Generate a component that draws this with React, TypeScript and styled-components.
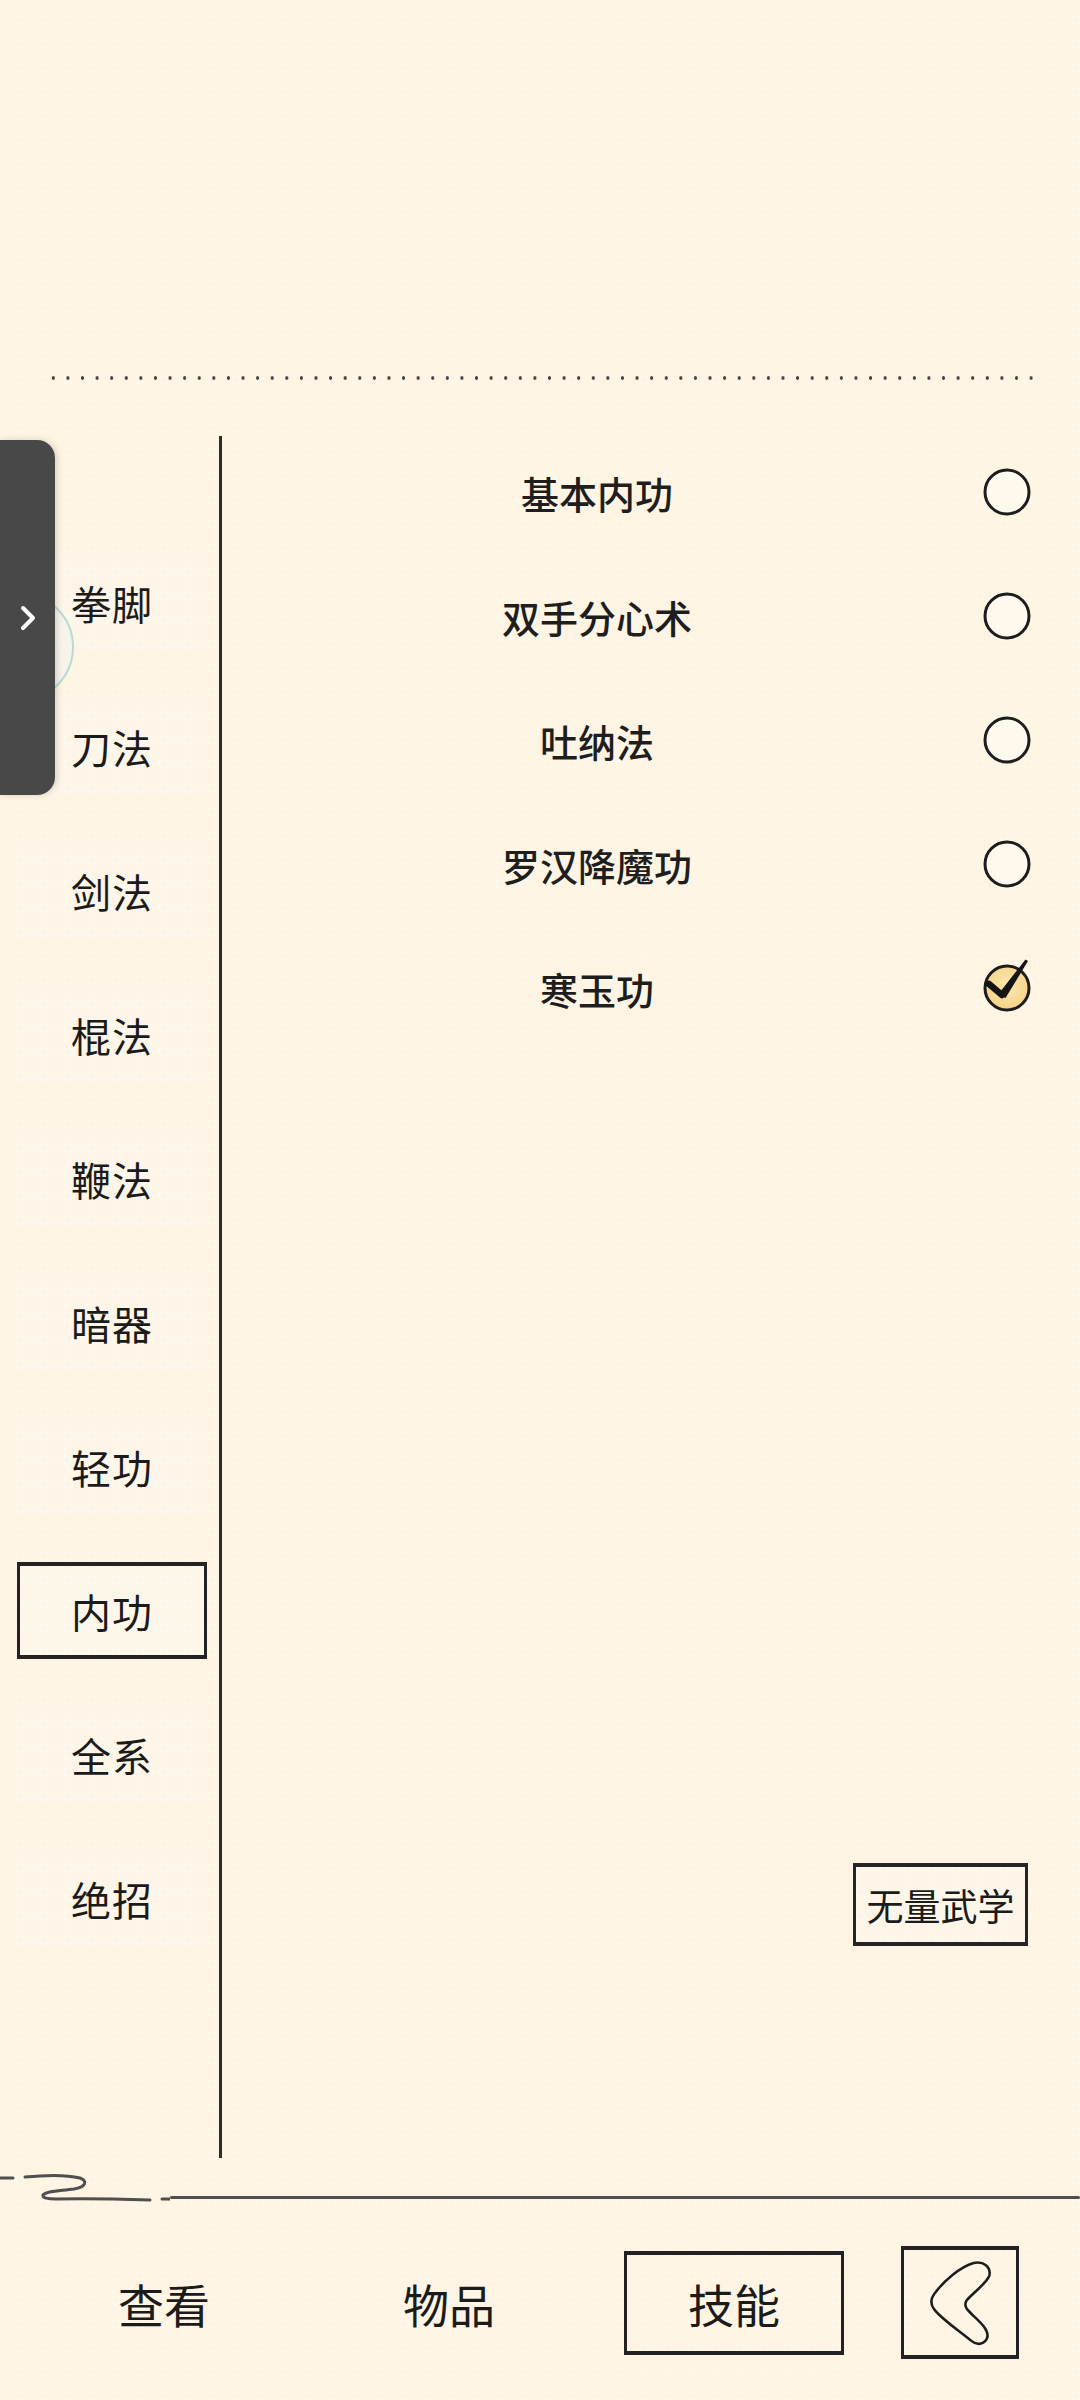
import React, { useState } from 'react';
import styled, { createGlobalStyle } from 'styled-components';

const GlobalStyle = createGlobalStyle`
  html, body {
    margin: 0;
    padding: 0;
    background: #fdf4e3;
  }
  body {
    font-family: "Noto Sans CJK SC", "Noto Sans", sans-serif;
    color: #1b1b1b;
  }
`;

const Page = styled.div`
  position: relative;
  width: 1080px;
  height: 2400px;
  overflow: hidden;
  background-color: #fdf4e3;
  background-image: radial-gradient(circle, transparent 3px, rgba(255, 255, 255, 0.45) 4px, transparent 5.5px);
  background-size: 24px 24px;
  background-position: 8px 8px;
`;

const TopSpace = styled.div`
  height: 376px;
`;

const DottedRule = styled.div`
  height: 4px;
  margin: 0 46px;
  background: radial-gradient(circle, #333 1.5px, transparent 2px) 0 0 / 14.6px 4px repeat-x;
  opacity: 0.9;
`;

const Main = styled.div`
  display: flex;
  margin-top: 56px;
  height: 1722px;
`;

const Sidebar = styled.nav`
  width: 222px;
  box-sizing: border-box;
  border-right: 3px solid #2c2c2c;
  display: flex;
  flex-direction: column;
  gap: 47px;
  padding-top: 118px;
`;

const SideItem = styled.div<{ $active?: boolean }>`
  width: 190px;
  height: 97px;
  margin-left: 17px;
  box-sizing: border-box;
  display: flex;
  align-items: center;
  justify-content: center;
  font-size: 40px;
  letter-spacing: 1px;
  background: ${({ $active }) => ($active ? 'rgba(255,255,255,0.25)' : 'rgba(255,255,255,0.15)')};
  border: 3px solid ${({ $active }) => ($active ? '#232323' : 'transparent')};
  border-top-width: ${({ $active }) => ($active ? '4px' : '3px')};
  border-bottom-width: ${({ $active }) => ($active ? '4px' : '3px')};
`;

const Content = styled.section`
  flex: 1;
  display: flex;
  flex-direction: column;
  gap: 44px;
  padding-top: 16px;
`;

const SkillRow = styled.div`
  height: 80px;
  display: grid;
  grid-template-columns: 1fr 70px;
  align-items: center;
  padding-right: 38px;
`;

const SkillName = styled.div`
  text-align: center;
  font-size: 38px;
  font-weight: 500;
  color: #1e1e1e;
`;

const RadioWrap = styled.div`
  display: flex;
  justify-content: center;
  align-items: center;
  cursor: pointer;

  svg {
    overflow: visible;
  }
`;

const BoxButton = styled.button`
  margin-top: auto;
  margin-bottom: 212px;
  margin-right: 52px;
  align-self: flex-end;
  width: 175px;
  height: 83px;
  box-sizing: border-box;
  background: rgba(255, 255, 255, 0.2);
  border: 3px solid #252525;
  border-top-width: 4px;
  border-bottom-width: 4px;
  font-family: inherit;
  font-size: 37px;
  color: #1b1b1b;
  padding: 0;
`;

const RuleRow = styled.div`
  display: flex;
  align-items: flex-end;
  height: 45px;
  margin-top: 2px;
`;

const RuleLine = styled.div`
  flex: 1;
  height: 3px;
  margin-bottom: 6px;
  background: #4f4f4f;
  border-radius: 2px;
`;

const BottomNav = styled.nav`
  display: flex;
  align-items: center;
  height: 195px;
  padding-left: 54px;
  gap: 65px;
`;

const NavTab = styled.div<{ $active?: boolean }>`
  width: 220px;
  height: 104px;
  box-sizing: border-box;
  display: flex;
  align-items: center;
  justify-content: center;
  font-size: 46px;
  font-weight: 400;
  border: 3px solid ${({ $active }) => ($active ? '#222' : 'transparent')};
  border-top-width: 4px;
  border-bottom-width: 4px;
`;

const BackButton = styled.div`
  width: 118px;
  height: 113px;
  margin-left: -8px;
  box-sizing: border-box;
  display: flex;
  align-items: center;
  justify-content: center;
  border: 3px solid #222;
  border-top-width: 4px;
  border-bottom-width: 4px;
`;

// floating drawer handle on the left edge
const HaloRing = styled.div`
  position: absolute;
  left: -36px;
  top: 592px;
  width: 110px;
  height: 110px;
  box-sizing: border-box;
  border-radius: 50%;
  border: 2px solid #b6dbd3;
  background: rgba(242, 242, 236, 0.7);
`;

const PullTab = styled.div`
  position: absolute;
  left: 0;
  top: 440px;
  width: 55px;
  height: 355px;
  background: #484848;
  border-radius: 0 18px 18px 0;
  box-shadow: 2px 0 6px rgba(0, 0, 0, 0.15);
  display: flex;
  align-items: center;
  justify-content: center;
`;

const categories = ['拳脚', '刀法', '剑法', '棍法', '鞭法', '暗器', '轻功', '内功', '全系', '绝招'];
const skills = ['基本内功', '双手分心术', '吐纳法', '罗汉降魔功', '寒玉功'];

const Radio: React.FC<{ checked: boolean }> = ({ checked }) => (
  <svg width="60" height="60" viewBox="0 0 60 60">
    <defs>
      <radialGradient id="radioFill" cx="50%" cy="45%" r="55%">
        <stop offset="0%" stopColor="#fde7b2" />
        <stop offset="100%" stopColor="#f5d386" />
      </radialGradient>
    </defs>
    <circle
      cx="30"
      cy="30"
      r="22"
      fill={checked ? 'url(#radioFill)' : 'rgba(255,255,255,0.35)'}
      stroke="#1d1d1d"
      strokeWidth="3"
    />
    <path d="M8.5 28.5 C9 20 14 11 24 8.3" fill="none" stroke="#1d1d1d" strokeWidth="1.2" opacity="0.6" />
    {checked && (
      <g fill="#151515">
        <path d="M12 26 L25 37" stroke="#151515" strokeWidth="6.5" strokeLinecap="round" />
        <path d="M21.5 36 L48.5 1.5 L51 3 L28.5 40 Z" />
      </g>
    )}
  </svg>
);

const Chevron = () => (
  <svg width="20" height="30" viewBox="0 0 20 30">
    <path d="M5 5 L15 15 L5 25" fill="none" stroke="#fff" strokeWidth="4" strokeLinecap="round" strokeLinejoin="round" />
  </svg>
);

const CloudCurl = () => (
  <svg width="170" height="45" viewBox="0 0 170 45">
    <g fill="none" stroke="#4f4f4f" strokeWidth="3" strokeLinecap="round">
      <path d="M0 18 L13 18" />
      <path d="M25 17 C45 15 68 15 80 18 C88 21 86 27 74 29 C60 31 46 31 43 35 C42 38 48 39 56 39 C90 38 120 39 150 40" />
      <path d="M162 39 L170 39" />
    </g>
  </svg>
);

const BackGlyph = () => (
  <svg width="64" height="88" viewBox="-2 -2 64 90">
    <path
      d="M44 2 C54 0 62 6 60 15 C58 22 44 32 37 40 C35 43 35 46 37 49 C44 58 60 68 58 78 C56 85 48 87 42 82 C30 72 12 60 4 50 C-1 44 0 38 5 32 C14 20 30 6 44 2 Z"
      fill="none"
      stroke="#1d1d1d"
      strokeWidth="2.6"
    />
  </svg>
);

export default function App() {
  const [category, setCategory] = useState('内功');
  const [selected, setSelected] = useState('寒玉功');
  const [tab, setTab] = useState('技能');

  return (
    <Page>
      <GlobalStyle />
      <TopSpace />
      <DottedRule />

      <Main>
        <Sidebar>
          {categories.map((c) => (
            <SideItem key={c} $active={c === category} onClick={() => setCategory(c)}>
              {c}
            </SideItem>
          ))}
        </Sidebar>

        <Content>
          {skills.map((s) => (
            <SkillRow key={s}>
              <SkillName>{s}</SkillName>
              <RadioWrap onClick={() => setSelected(s)}>
                <Radio checked={s === selected} />
              </RadioWrap>
            </SkillRow>
          ))}
          <BoxButton>无量武学</BoxButton>
        </Content>
      </Main>

      <RuleRow>
        <CloudCurl />
        <RuleLine />
      </RuleRow>

      <BottomNav>
        {['查看', '物品', '技能'].map((t) => (
          <NavTab key={t} $active={t === tab} onClick={() => setTab(t)}>
            {t}
          </NavTab>
        ))}
        <BackButton>
          <BackGlyph />
        </BackButton>
      </BottomNav>

      <HaloRing />
      <PullTab>
        <Chevron />
      </PullTab>
    </Page>
  );
}
